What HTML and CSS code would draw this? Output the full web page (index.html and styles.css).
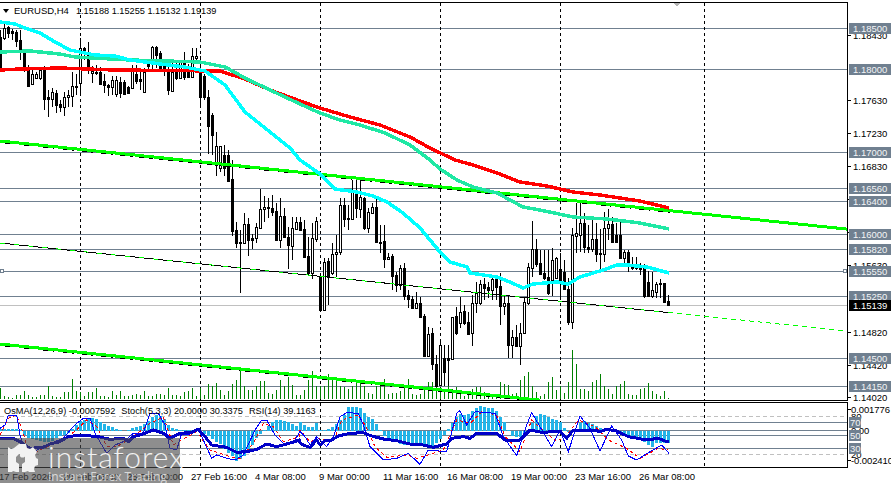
FILE: index.html
```html
<!DOCTYPE html>
<html lang="en">
<head>
<meta charset="utf-8">
<title>EURUSD,H4</title>
<link rel="stylesheet" href="styles.css">
</head>
<body>
<main class="terminal">
  <section class="pane pane--price">
    <div class="plot">
      <svg id="price-chart" class="chart" viewBox="0 3 847 397" aria-label="EURUSD H4 candlestick chart"></svg>
      <div class="legend legend--price">
        <span class="legend-caret"></span>
        <span class="legend-symbol">EURUSD,H4</span>
        <span class="legend-ohlc">1.15188 1.15255 1.15132 1.19139</span>
      </div>
    </div>
    <div class="scale" id="price-scale" data-top="3"></div>
  </section>
  <section class="pane pane--osc">
    <div class="plot">
      <svg id="osc-chart" class="chart" viewBox="0 403 847 64" aria-label="OsMA, Stochastic and RSI"></svg>
      <div class="legend legend--osc">
        <span class="legend-item legend-item--osma">OsMA(12,26,9) -0.0007592</span>
        <span class="legend-item legend-item--stoch">Stoch(5,3,3) 20.0000 30.3375</span>
        <span class="legend-item">RSI(14) 39.1163</span>
      </div>
    </div>
    <div class="scale" id="osc-scale" data-top="403"></div>
  </section>
  <div class="time-axis">
    <span>17 Feb 2026</span>
    <span>20 Feb 08:00</span>
    <span>25 Feb 00:00</span>
    <span>27 Feb 16:00</span>
    <span>4 Mar 08:00</span>
    <span>9 Mar 00:00</span>
    <span>11 Mar 16:00</span>
    <span>16 Mar 08:00</span>
    <span>19 Mar 00:00</span>
    <span>23 Mar 16:00</span>
    <span>26 Mar 08:00</span>
  </div>
  <aside class="watermark">
    <svg class="watermark-logo" viewBox="0 0 30 28" aria-hidden="true">
      <path class="logo-shape" fill-rule="evenodd" d="M11 0h7l1 4 3 1 3-2 4 5-2 3 1 3 2 1v6l-3 1-1 3 1 3-5 1-2-2-3 1v1h-3v-9l3-2v-5l-3-3h-3l-3 3v5l3 2v9h-3v-1l-3-1-2 2-5-1 1-3-1-3-3-1v-6l2-1 1-3-2-3 4-5 3 2 3-1z"/>
      <circle class="logo-shape" cx="14.5" cy="11" r="2.6"/>
    </svg>
    <div class="watermark-text">
      <div class="watermark-name">instaforex</div>
      <div class="watermark-tag">Instant Forex Trading</div>
    </div>
  </aside>
</main>
<script src="chart.js"></script>
</body>
</html>
```

FILE: styles.css
```css
* { box-sizing: border-box; }
html, body {
  margin: 0;
  padding: 0;
  background: #fff;
}
body {
  width: 891px;
  height: 483px;
  overflow: hidden;
  font-family: "Liberation Sans", Arial, sans-serif;
  font-size: 9.5px;
  color: #000;
}
.terminal {
  position: relative;
  width: 891px;
  height: 483px;
  padding-top: 2px;
  display: flex;
  flex-direction: column;
  overflow: hidden;
}
.pane {
  display: grid;
  grid-template-columns: 848px 43px;
}
.pane--price { height: 399px; margin-bottom: 1px; }
.pane--osc { height: 66px; }
.plot {
  position: relative;
  border-top: 1px solid #000;
  border-bottom: 1px solid #000;
  border-right: 1px solid #000;
  overflow: hidden;
}
.chart {
  display: block;
  width: 847px;
  height: 100%;
  shape-rendering: crispEdges;
}
.legend {
  position: absolute;
  display: flex;
  align-items: center;
  white-space: nowrap;
  line-height: 12px;
  font-size: 9.2px;
}
.legend--price { left: 3px; top: 2px; }
.legend--osc { left: 4px; top: 2px; }
.legend-caret {
  width: 0;
  height: 0;
  border-left: 3.5px solid transparent;
  border-right: 3.5px solid transparent;
  border-top: 4px solid #000;
  margin-right: 5px;
}
.legend-symbol { margin-right: 7px; font-size: 9.5px; }
.legend-item--osma { margin-right: 6px; }
.legend-item--stoch { margin-right: 6px; }

.scale {
  position: relative;
  overflow: visible;
}
.scale-tick {
  position: absolute;
  left: 0;
  width: 3px;
  height: 1px;
  background: #000;
}
.scale-value {
  position: absolute;
  left: 5px;
  line-height: 11px;
  height: 11px;
  white-space: nowrap;
}
#osc-scale .scale-value { left: 3px; letter-spacing: -0.1px; }
.scale-level {
  position: absolute;
  left: 1px;
  width: 42px;
  height: 11px;
  line-height: 11px;
  padding-left: 4px;
  background: #708090;
  color: #f4f5f6;
  white-space: nowrap;
}
.scale-level--short {
  width: 12px;
  padding-left: 1px;
}
.scale-level--bid {
  background: #000;
  color: #fff;
}

.time-axis {
  display: grid;
  grid-template-columns: repeat(11, 64px);
  padding-top: 3px;
  line-height: 12px;
  white-space: nowrap;
}
.time-axis span { margin-left: -1px; }

.watermark {
  position: absolute;
  left: 0;
  bottom: 0;
  width: 180px;
  height: 45px;
  background: rgba(72, 72, 72, 0.62);
  display: flex;
  align-items: flex-start;
  padding: 6px 0 0 8px;
  color: #fff;
}
.watermark-logo {
  width: 30px;
  height: 28px;
  flex: none;
  margin-right: 10px;
}
.logo-shape { fill: #f2f2f2; }
.watermark-text { margin-top: -1px; }
.watermark-name {
  font-family: Lato, "Open Sans", sans-serif;
  font-weight: 300;
  font-size: 30px;
  line-height: 27px;
  letter-spacing: 1px;
  color: #f2f2f2;
}
.watermark-tag {
  font-family: "Open Sans", sans-serif;
  font-size: 12px;
  line-height: 13px;
  color: rgba(255, 255, 255, 0.68);
}

/* chart primitives */
.grid-level { stroke: #708090; stroke-width: 1; }
.grid-bid { stroke: #c0c0c0; stroke-width: 1; }
.grid-dash { stroke: #c0c0c0; stroke-width: 1; stroke-dasharray: 4 3; }
.vsep { stroke: #000; stroke-width: 1; stroke-dasharray: 3 3; }
.wick { stroke: #000; stroke-width: 1; }
.body-up { fill: #fff; stroke: #000; stroke-width: 1; }
.body-down { fill: #000; stroke: #000; stroke-width: 1; }
.volume { stroke: #008000; stroke-width: 1; }
.ma { fill: none; stroke-width: 3.5; stroke-linejoin: round; }
.ma--cyan { stroke: #00ffff; }
.ma--teal { stroke: #1fe8a4; }
.ma--red { stroke: #ff0000; }
.channel { fill: none; stroke: #00ff00; stroke-width: 3; }
.channel--under { stroke: #000; stroke-width: 1; stroke-dasharray: 14 6; }
.channel--mid-base { stroke: #000; stroke-width: 1; }
.channel--mid { stroke-width: 1; stroke-dasharray: 5 9; }
.channel--tail { stroke-width: 1; stroke-dasharray: 5 4; }
.handle { fill: #fff; stroke: #708090; stroke-width: 1; }
.peak-mark { fill: #b4b4b4; }
.hist { fill: #22b4e8; }
.rsi { fill: none; stroke: #0000c8; stroke-width: 3; stroke-linejoin: round; }
.stoch-main { fill: none; stroke: #0000ff; stroke-width: 1; }
.stoch-signal { fill: none; stroke: #ff0000; stroke-width: 1; stroke-dasharray: 3 3; }
```

FILE: chart.js
```js
(function () {
  var NS = 'http://www.w3.org/2000/svg';
  function el(parent, name, attrs) {
    var n = document.createElementNS(NS, name);
    for (var k in attrs) n.setAttribute(k, attrs[k]);
    parent.appendChild(n);
    return n;
  }
  function hline(svg, y, cls, x2) {
    el(svg, 'line', { x1: 0, x2: x2 || 847, y1: y + 0.5, y2: y + 0.5, 'class': cls });
  }
  function poly(svg, pts, cls) {
    el(svg, 'polyline', { points: pts.map(function (p) { return p.join(','); }).join(' '), 'class': cls });
  }

  var VSEPS = [80, 200, 320, 440, 560, 704];
  var LEVELS = [28, 69, 152, 188, 201, 234, 249, 271, 296, 358, 386];

  // [high, body top, body bottom, low, up?]
  var C = [
    [30,37,67,70,0],[24,28,38,40,1],[26,27,33,38,0],[29,31,33,40,0],[30,32,41,47,0],[30,40,50,60,0],
    [50,53,66,72,0],[65,67,86,86,0],[70,74,84,85,1],[72,74,78,78,1],[67,70,78,80,1],[66,67,99,110,0],
    [90,97,99,117,0],[88,92,99,107,1],[90,93,105,113,0],[100,104,107,112,0],[92,97,107,116,1],[90,95,97,107,1],
    [72,86,96,107,1],[74,86,87,95,1],[38,48,83,93,1],[47,48,53,60,0],[42,52,68,74,0],[66,71,73,83,1],
    [65,72,73,75,1],[67,72,84,84,0],[74,81,85,93,0],[84,85,87,96,0],[76,80,87,95,1],[76,80,94,97,1],
    [77,82,93,98,0],[80,82,94,94,0],[86,87,93,94,0],[65,70,88,89,1],[65,74,81,84,0],[70,79,81,90,0],
    [68,72,92,93,1],[60,62,66,70,0],[46,47,63,69,1],[46,47,55,68,0],[51,53,68,70,0],[60,62,71,76,0],
    [60,70,90,95,0],[62,72,91,91,1],[62,72,78,80,0],[60,60,78,79,1],[52,62,77,80,0],[64,72,77,78,0],
    [48,56,77,78,1],[48,56,58,60,1],[56,73,97,107,0],[74,76,97,100,0],[90,97,126,154,0],[113,115,135,155,0],
    [132,146,165,176,1],[146,146,168,172,1],[145,155,168,176,0],[150,155,181,182,0],[160,179,231,236,0],
    [222,230,243,248,0],[230,242,243,293,0],[213,224,243,243,1],[218,224,240,256,0],[234,238,240,249,0],
    [223,227,238,243,1],[189,209,228,228,1],[196,207,209,222,1],[198,207,208,218,1],[195,208,212,216,0],
    [203,211,240,240,0],[198,216,240,248,1],[208,216,237,237,0],[227,237,245,269,0],[217,228,246,260,1],
    [217,222,229,230,1],[217,222,230,230,0],[220,229,257,258,0],[237,256,273,275,0],[223,238,273,279,1],
    [217,221,239,242,1],[277,277,310,312,0],[258,262,310,311,1],[258,261,277,305,0],[243,254,273,275,1],
    [235,252,254,277,1],[198,205,252,255,1],[198,205,219,227,0],[205,218,219,230,0],[180,192,219,219,1],
    [180,192,208,218,0],[179,197,209,218,1],[197,198,228,230,0],[208,212,228,233,1],[203,207,213,214,1],
    [199,207,242,243,0],[225,242,243,253,0],[225,241,259,268,0],[253,257,259,259,1],[254,256,276,290,0],
    [272,275,285,292,0],[265,268,285,290,1],[263,268,296,300,0],[290,295,299,308,0],[296,299,308,308,0],
    [292,303,308,308,1],[297,303,317,317,0],[314,316,356,357,0],[327,334,356,357,1],[328,333,364,370,0],
    [355,364,386,386,0],[340,345,385,386,1],[345,358,372,386,0],[345,358,360,386,0],[317,317,359,360,1],
    [307,316,333,335,0],[297,312,323,328,1],[305,311,323,325,0],[312,322,334,335,0],[295,303,333,346,1],
    [282,293,303,313,1],[280,284,303,305,1],[278,284,288,300,0],[282,287,290,298,0],[278,279,290,300,1],
    [275,279,287,300,0],[273,286,306,325,0],[295,303,306,315,1],[296,303,345,358,0],[330,337,345,358,1],
    [325,337,346,347,0],[323,333,346,365,1],[297,302,333,333,1],[263,267,303,305,1],[221,249,268,277,1],
    [239,249,264,267,0],[250,263,274,275,0],[250,273,278,280,0],[250,277,293,295,0],[248,260,280,296,1],
    [257,258,278,279,1],[253,269,281,297,0],[260,272,289,290,0],[278,289,322,325,0],[228,235,322,329,1],
    [203,233,236,253,1],[203,223,235,252,1],[213,223,247,253,0],[225,247,249,253,0],[220,239,249,252,1],
    [223,239,254,262,0],[229,253,254,272,0],[212,228,254,262,1],[209,224,228,240,1],[217,224,242,243,0],
    [223,235,242,243,0],[222,235,258,259,0],[250,252,258,267,1],[250,252,265,272,0],[257,265,268,270,0],
    [257,266,268,270,0],[263,267,269,275,0],[264,268,296,298,0],[271,282,296,297,0],[272,290,296,298,1],
    [282,284,292,298,1],[279,283,284,298,0],[283,283,302,303,0],[295,301,305,306,0]
  ];

  var V = [11,3,2,1,4,4,8,4,2,2,4,4,13,3,2,2,7,7,20,8,7,3,7,7,11,3,3,2,8,4,8,3,3,4,5,4,8,3,3,5,5,4,11,4,4,3,7,8,11,3,11,4,15,13,16,9,4,8,15,19,31,13,9,9,13,18,18,6,5,9,19,13,22,14,4,
    4,9,19,28,13,13,13,25,19,20,13,12,10,13,18,16,13,6,5,13,13,20,5,6,6,8,13,20,5,4,5,12,17,17,15,10,10,13,10,12,5,3,7,10,12,12,7,5,5,5,17,15,14,5,6,19,23,27,13,7,3,5,17,22,9,13,6,17,49,35,10,10,8,17,19,25,13,10,5,13,15,18,5,4,4,10,11,16,8,5,3,8,1];

  var HIST = [2,2,2,2,2,1,-4,-7,-8,-9,-10,-11,-11,-10,-7,-5,-4,-2,2,6,10,11,12,13,12,9,7,5,4,2,1,0,1,3,4,5,7,10,14,16,15,12,6,3,2,1,1,1,1,1,0,-3,-5,-8,-11,-13,-18,-22,-25,-30,-28,-25,-20,-14,-7,-3,1,5,9,11,11,10,9,7,5,
    9,6,4,4,8,1,1,2,4,7,11,16,24,24,24,23,18,14,12,7,1,-5,-7,-9,-11,-13,-14,-13,-13,-14,-15,-16,-17,-15,-12,-8,-4,2,8,14,17,16,17,20,23,25,24,23,23,20,14,9,1,-5,-6,-6,-3,1,8,15,17,16,14,12,11,9,3,-1,-1,1,8,10,8,7,5,3,2,2,1,0,-1,-3,-5,-7,-8,-9,-11,-14,-16,-12,-12,-12,-12];

  var CYAN = [[0,22],[15,24],[25,28],[40,33],[55,42],[70,50],[95,55],[115,56],[130,60],[160,64],[185,67],[205,71],[225,85],[245,112],[265,128],[290,148],[300,160],[313,169],[320,174],[335,189],[357,192],[373,196],[387,202],[403,213],[420,228],[440,252],[450,262],[467,267],[470,273],[497,277],[510,282],[523,288],[533,284],[557,282],[568,284],[580,277],[603,270],[617,265],[627,265],[647,267],[669,273]];
  var TEAL = [[0,52],[30,51],[60,54],[75,57],[130,60],[200,62],[225,67],[245,78],[270,90],[300,104],[320,113],[340,120],[360,125],[385,133],[410,145],[430,160],[440,169],[457,180],[473,187],[497,193],[510,200],[523,207],[540,210],[573,217],[607,219],[640,223],[669,229]];
  var RED = [[0,70],[20,69],[60,68],[115,70],[220,71],[245,79],[270,90],[300,101],[320,108],[350,117],[380,125],[410,137],[430,148],[455,160],[473,165],[497,173],[520,182],[547,186],[573,192],[600,195],[640,201],[669,208]];

  // oscillator series are measured at 3x zoom, origin (0,370)
  function z(pts, ox) { return pts.map(function (p) { return [ox + p[0] / 3, 370 + p[1] / 3]; }); }

  var RSI = z([[0,207],[40,205],[60,215],[90,235],[130,232],[150,222],[180,215],[205,200],[240,195],[295,200],[330,208],[370,205],[385,215],[400,200],[420,195],[460,180],[490,190],[510,205],[540,190],[575,187],[595,178],[615,200],[635,225],[680,232],[710,247],[740,245],[770,238],[800,222],[830,230],[850,225],[899,210]], 0)
    .concat(z([[0,218],[10,225],[30,232],[50,210],[60,225],[75,212],[95,210],[115,198],[150,190],[190,188],[215,198],[250,207],[290,212],[330,222],[370,225],[400,232],[440,222],[455,205],[490,200],[510,205],[530,190],[590,190],[615,210],[660,210],[690,180],[730,188],[750,185],[780,183],[800,205],[820,180],[880,180],[900,185],[920,178],[950,183],[985,200],[1040,210],[1075,205],[1100,215],[1107,215]], 300));
  var STOCH = z([[0,175],[15,165],[25,135],[50,135],[60,195],[75,240],[85,285],[105,245],[125,230],[190,205],[215,175],[230,160],[250,145],[270,145],[285,190],[320,250],[345,225],[370,215],[400,190],[430,190],[450,130],[475,130],[495,165],[510,235],[530,240],[545,190],[565,195],[595,175],[610,210],[635,265],[650,255],[680,265],[705,270],[730,255],[765,180],[785,150],[800,150],[825,195],[855,225],[880,220],[899,185]], 0)
    .concat(z([[0,185],[15,200],[30,225],[50,200],[80,230],[100,200],[120,140],[140,128],[175,130],[190,165],[210,230],[250,270],[290,265],[325,250],[360,283],[385,240],[440,245],[470,130],[480,122],[500,165],[525,125],[585,130],[610,200],[650,257],[680,165],[695,128],[720,170],[755,230],[780,180],[805,245],[840,138],[870,175],[900,243],[935,168],[965,210],[985,258],[1010,270],[1050,245],[1085,225],[1107,250]], 300));
  var SIGNAL = z([[0,195],[25,145],[50,135],[70,190],[90,260],[120,240],[190,210],[230,180],[260,150],[290,170],[320,230],[350,230],[400,200],[450,160],[490,140],[520,225],[545,210],[590,185],[630,240],[690,260],[720,265],[760,220],[790,160],[820,170],[850,215],[899,200]], 0)
    .concat(z([[0,180],[30,215],[60,205],[100,215],[125,150],[175,135],[195,165],[225,230],[260,262],[320,255],[350,265],[385,255],[430,240],[470,150],[510,160],[545,125],[590,135],[615,200],[660,245],[695,150],[740,190],[770,215],[800,195],[835,150],[885,170],[925,210],[980,235],[1020,265],[1075,235],[1105,240]], 300));

  /* ---------- price pane ---------- */
  var p = document.getElementById('price-chart');
  LEVELS.forEach(function (y) { hline(p, y, 'grid-level'); });
  hline(p, 305, 'grid-bid');
  VSEPS.forEach(function (x) {
    el(p, 'line', { x1: x + 0.5, x2: x + 0.5, y1: 3, y2: 400, 'class': 'vsep' });
  });
  V.forEach(function (h, i) {
    var x = i * 4 + 0.5;
    el(p, 'line', { x1: x, x2: x, y1: 399, y2: 399 - h, 'class': 'volume' });
  });
  C.forEach(function (c, i) {
    var x = i * 4 + 0.5;
    el(p, 'line', { x1: x, x2: x, y1: c[0], y2: c[3], 'class': 'wick' });
    el(p, 'rect', { x: x - 1, y: c[1] + 0.5, width: 2, height: Math.max(c[2] - c[1], 1), 'class': c[4] ? 'body-up' : 'body-down' });
  });
  function chan(y0, x2) { return [[0, y0], [x2, y0 + 0.104 * x2]]; }
  poly(p, [[0, 142.5], [670, 212.2]], 'channel channel--under');
  poly(p, chan(141, 847), 'channel');
  poly(p, [[0, 243], [668, 312.5]], 'channel channel--mid-base');
  poly(p, [[0, 243], [668, 312.5]], 'channel channel--mid');
  poly(p, [[668, 312.5], [847, 331]], 'channel channel--tail');
  poly(p, [[0, 345.5], [540, 401.6]], 'channel channel--under');
  poly(p, chan(344, 540), 'channel');
  poly(p, RED, 'ma ma--red');
  poly(p, TEAL, 'ma ma--teal');
  poly(p, CYAN, 'ma ma--cyan');
  el(p, 'rect', { x: 0.5, y: 269.5, width: 3, height: 3, 'class': 'handle' });
  el(p, 'rect', { x: 843.5, y: 269.5, width: 3, height: 3, 'class': 'handle' });
  el(p, 'path', { d: 'M674 3h6l-3 4z', 'class': 'peak-mark' });

  /* ---------- oscillator pane ---------- */
  var o = document.getElementById('osc-chart');
  hline(o, 416, 'grid-dash');
  hline(o, 454, 'grid-dash');
  [422, 430, 435, 448].forEach(function (y) { hline(o, y, 'grid-level'); });
  VSEPS.forEach(function (x) {
    el(o, 'line', { x1: x + 0.5, x2: x + 0.5, y1: 403, y2: 467, 'class': 'vsep' });
  });
  HIST.forEach(function (h, i) {
    var x = i * 4 - 1;
    el(o, 'rect', { x: x, y: h > 0 ? 431 - h : 431, width: 3, height: Math.abs(h), 'class': 'hist' });
  });
  poly(o, SIGNAL, 'stoch-signal');
  poly(o, STOCH, 'stoch-main');
  poly(o, RSI, 'rsi');

  /* ---------- right-hand scales ---------- */
  function addScale(id, values, ticks, levels) {
    var box = document.getElementById(id);
    var top = +box.getAttribute('data-top') - 1;
    function add(cls, text, y) {
      var d = document.createElement('div');
      d.className = cls;
      d.textContent = text;
      d.style.top = (y - top) + 'px';
      box.appendChild(d);
    }
    ticks.forEach(function (y) { add('scale-tick', '', y); });
    values.forEach(function (v) { add('scale-value', v[0], v[1] - 5); });
    levels.forEach(function (v) { add('scale-level' + (v[2] ? ' ' + v[2] : ''), v[0], v[1] - 5); });
  }
  addScale('price-scale',
    [['1.18430', 35], ['1.17630', 100], ['1.17230', 133], ['1.16830', 166], ['1.15630', 265], ['1.14820', 332], ['1.14420', 365], ['1.14020', 397]],
    [35, 100, 133, 166, 199, 232, 265, 332, 365, 397],
    [['1.18500', 28], ['1.18000', 69], ['1.17000', 152], ['1.16560', 188], ['1.16400', 201], ['1.16000', 234], ['1.15820', 249], ['1.15550', 271], ['1.15250', 296], ['1.14500', 358], ['1.14150', 386], ['1.15139', 305, 'scale-level--bid']]);
  addScale('osc-scale',
    [['0.001776', 409], ['80', 416], ['0.00', 430], ['20', 454], ['-0.002410', 460]],
    [409, 460],
    [['70', 422, 'scale-level--short'], ['50', 435, 'scale-level--short'], ['30', 448, 'scale-level--short']]);
})();
```
